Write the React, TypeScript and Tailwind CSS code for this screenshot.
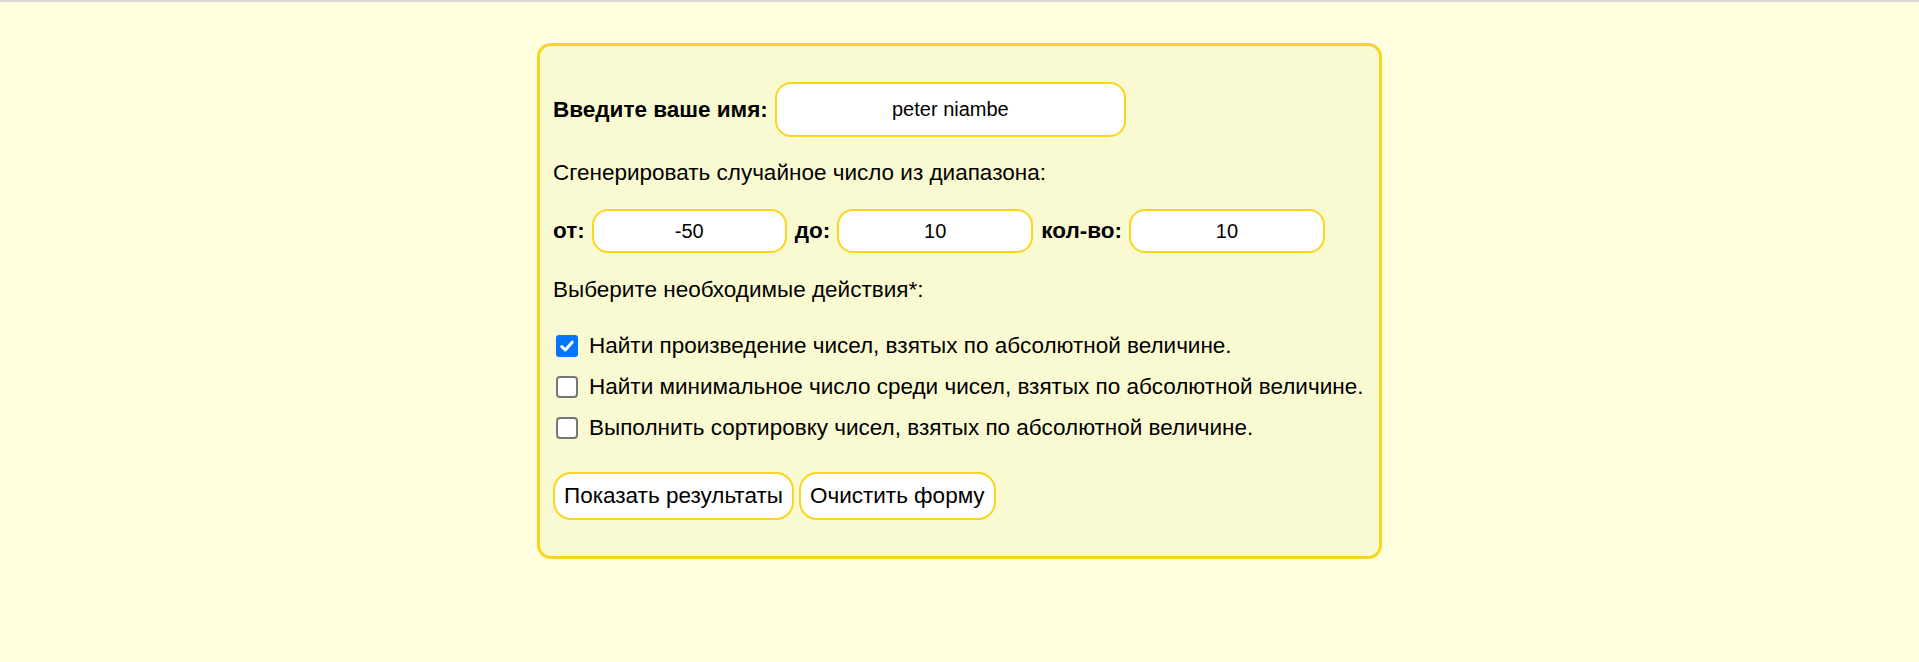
import React from "react";

const font = { fontFamily: '"Liberation Sans", Arial, sans-serif' };

function Box({ checked }: { checked?: boolean }) {
  if (checked) {
    return (
      <span className="flex h-[22px] w-[22px] shrink-0 items-center justify-center rounded-[3px] bg-[#0075ff]">
        <svg width="16" height="16" viewBox="0 0 16 16" fill="none">
          <path d="M2.8 8.6 L6.3 12 L13.2 4.2" stroke="#fff" strokeWidth="3" strokeLinecap="round" strokeLinejoin="round" />
        </svg>
      </span>
    );
  }
  return <span className="block h-[22px] w-[22px] shrink-0 rounded-[4px] border-2 border-[#767676] bg-white" />;
}

export default function App() {
  return (
    <div className="min-h-[662px] w-full border-t-2 border-[#dadada] bg-[#ffffe0] text-black" style={font}>
      <div className="mx-auto mt-[41px] w-[845px] rounded-[14px] border-[3px] border-[#fad51c] bg-[#fafad2] px-[13px] pb-[36px] pt-[36px] text-[22.5px]">
        <div className="flex h-[55px] items-center gap-[7px]">
          <span className="font-bold">Введите ваше имя:</span>
          <input
            readOnly
            value="peter niambe"
            className="h-[55px] w-[351px] rounded-[16px] border-2 border-[#fad51c] bg-white text-center text-[20px] outline-none"
            style={font}
          />
        </div>
        <div className="mt-[23px] h-[26px] leading-[26px]">Сгенерировать случайное число из диапазона:</div>
        <div className="mt-[23px] flex h-[44px] items-center">
          <span className="font-bold">от:</span>
          <input readOnly value="-50" className="ml-[7px] h-[44px] w-[195px] rounded-[16px] border-2 border-[#fad51c] bg-white text-center text-[20px] outline-none" style={font} />
          <span className="ml-[8px] font-bold">до:</span>
          <input readOnly value="10" className="ml-[7px] h-[44px] w-[196px] rounded-[16px] border-2 border-[#fad51c] bg-white text-center text-[20px] outline-none" style={font} />
          <span className="ml-[8px] font-bold">кол-во:</span>
          <input readOnly value="10" className="ml-[7px] h-[44px] w-[196px] rounded-[16px] border-2 border-[#fad51c] bg-white text-center text-[20px] outline-none" style={font} />
        </div>
        <div className="mt-[24px] h-[26px] leading-[26px]">Выберите необходимые действия*:</div>
        <div className="mt-[22px] flex flex-col">
          <div className="flex h-[41px] items-center gap-[11px] pl-[3px]">
            <Box checked />
            <span>Найти произведение чисел, взятых по абсолютной величине.</span>
          </div>
          <div className="flex h-[41px] items-center gap-[11px] pl-[3px]">
            <Box />
            <span>Найти минимальное число среди чисел, взятых по абсолютной величине.</span>
          </div>
          <div className="flex h-[41px] items-center gap-[11px] pl-[3px]">
            <Box />
            <span>Выполнить сортировку чисел, взятых по абсолютной величине.</span>
          </div>
        </div>
        <div className="mt-[24px] flex gap-[5px]">
          <button className="h-[48px] rounded-[18px] border-2 border-[#fad51c] bg-white px-[9px] text-[22.5px]" style={font}>
            Показать результаты
          </button>
          <button className="h-[48px] rounded-[18px] border-2 border-[#fad51c] bg-white px-[9px] text-[22.5px]" style={font}>
            Очистить форму
          </button>
        </div>
      </div>
    </div>
  );
}
